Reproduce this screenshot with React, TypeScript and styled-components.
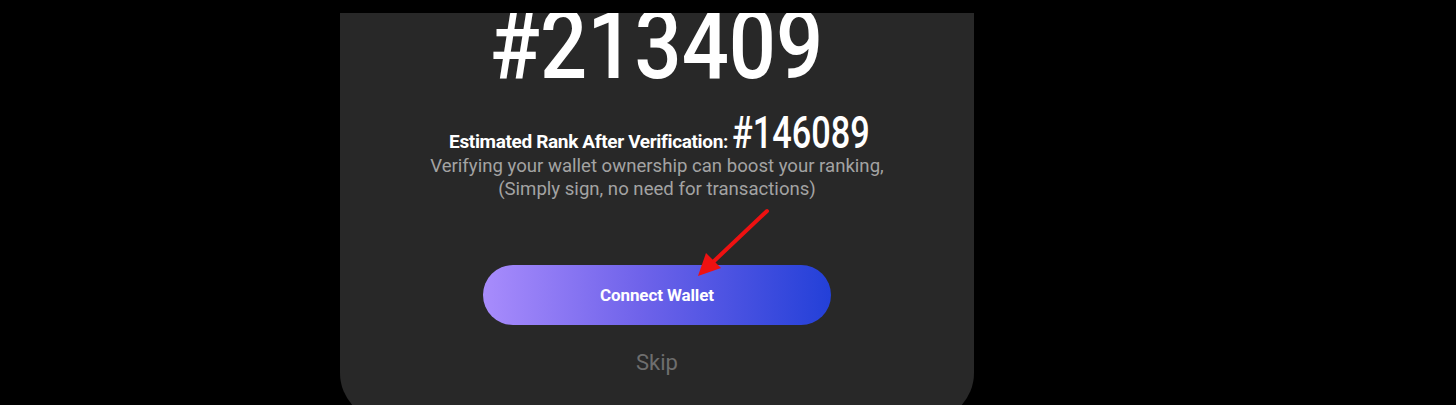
import React from "react";
import styled, { createGlobalStyle } from "styled-components";

const GlobalStyle = createGlobalStyle`
  html, body {
    margin: 0;
    padding: 0;
    background: #000;
  }
  body {
    font-family: Roboto, "Liberation Sans", sans-serif;
    overflow: hidden;
  }
`;

const Page = styled.div`
  width: 1456px;
  height: 405px;
  padding: 13px 0 0 340px;
  box-sizing: border-box;
  overflow: hidden;
`;

const Card = styled.div`
  position: relative;
  width: 634px;
  height: 408px;
  background: #282828;
  border-radius: 0 0 48px 48px;
  overflow: hidden;
  display: flex;
  flex-direction: column;
  align-items: center;
`;

const BigRank = styled.div`
  margin-top: -16px;
  font-size: 96px;
  line-height: 96px;
  font-weight: 500;
  color: #fff;
  white-space: nowrap;
  transform: scaleX(0.865);
`;

const RankRow = styled.div`
  margin-top: 18px;
  height: 44px;
  display: flex;
  align-items: baseline;
  gap: 4px;
`;

const RankLabel = styled.span`
  font-size: 19px;
  font-weight: 700;
  color: #fff;
  letter-spacing: -0.35px;
  white-space: nowrap;
`;

const RankValueBox = styled.span<{ $width: number }>`
  display: inline-block;
  width: ${({ $width }) => $width}px;
  white-space: nowrap;
`;

const RankValue = styled.span`
  display: inline-block;
  font-size: 44px;
  line-height: 44px;
  font-weight: 500;
  color: #fff;
  transform: scaleX(0.78);
  transform-origin: left center;
`;

const Description = styled.p`
  margin: 0;
  font-size: 18.6px;
  line-height: 23px;
  color: #a3a3a3;
  text-align: center;
`;

const ConnectButton = styled.button`
  margin-top: 64px;
  width: 348px;
  height: 60px;
  border: none;
  border-radius: 30px;
  background: linear-gradient(90deg, #a88cfc 0%, #6f63ea 45%, #2340d8 100%);
  color: #fff;
  font-family: Roboto, "Liberation Sans", sans-serif;
  font-size: 17px;
  font-weight: 700;
  letter-spacing: -0.1px;
  cursor: pointer;
`;

const SkipLink = styled.button`
  margin-top: 26px;
  background: none;
  border: none;
  padding: 0;
  font-family: Roboto, "Liberation Sans", sans-serif;
  font-size: 22px;
  line-height: 24px;
  color: #6e6e6e;
  cursor: pointer;
`;

const Arrow = styled.svg`
  position: absolute;
  left: 350px;
  top: 190px;
  pointer-events: none;
`;

export default function App() {
  return (
    <>
      <GlobalStyle />
      <Page>
        <Card>
          <BigRank>#213409</BigRank>
          <RankRow>
            <RankLabel>Estimated Rank After Verification:</RankLabel>
            <RankValueBox $width={133}>
              <RankValue>#146089</RankValue>
            </RankValueBox>
          </RankRow>
          <Description>
            Verifying your wallet ownership can boost your ranking,
            <br />
            (Simply sign, no need for transactions)
          </Description>
          <ConnectButton>Connect Wallet</ConnectButton>
          <SkipLink>Skip</SkipLink>
          <Arrow width="90" height="85" viewBox="0 0 90 85">
            <line x1="77" y1="8" x2="22" y2="60" stroke="#ee1111" strokeWidth="4" strokeLinecap="round" />
            <polygon points="8,73 16,50 31,65" fill="#ee1111" />
          </Arrow>
        </Card>
      </Page>
    </>
  );
}
